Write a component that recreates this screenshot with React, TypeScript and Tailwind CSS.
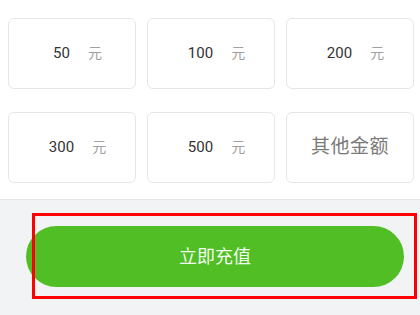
const AMOUNTS = [50, 100, 200, 300, 500]

export default function App() {
  return (
    <div className="w-[420px] h-[315px] overflow-hidden bg-[#f2f3f5] font-['Roboto','Noto_Sans_CJK_SC',sans-serif]">
      <div className="bg-white border-b border-[#e6e7ea] pl-[8px] pr-[6px] pt-[18px] pb-[16px]">
        <div className="grid grid-cols-3 gap-x-[11px] gap-y-[23px]">
          {AMOUNTS.map((a) => (
            <AmountCard key={a} amount={a} />
          ))}
          <div className="h-[71px] rounded-[6px] border border-[#e6e6e6] flex items-center justify-center">
            <span className="text-[19px] text-[#7a7a7a] tracking-[0.5px]">其他金额</span>
          </div>
        </div>
      </div>
      <div className="pt-[13px] pl-[26px] pr-[16px] relative">
        <button className="mt-[13px] w-[378px] h-[61px] rounded-full bg-[#52be25] text-white/95 text-[18px] flex items-center justify-center">
          立即充值
        </button>
        <div className="absolute left-[32px] top-[13px] w-[385px] h-[86px] border-[3px] border-[#ff0000] pointer-events-none" />
      </div>
    </div>
  )
}

function AmountCard({ amount }: { amount: number }) {
  return (
    <div className="h-[71px] rounded-[6px] border border-[#e6e6e6] flex items-center justify-center pl-[11px]">
      <span className="text-[15px] text-[#333]">{amount}</span>
      <span className="ml-[18px] text-[14px] text-[#a0a0a0]">元</span>
    </div>
  )
}
